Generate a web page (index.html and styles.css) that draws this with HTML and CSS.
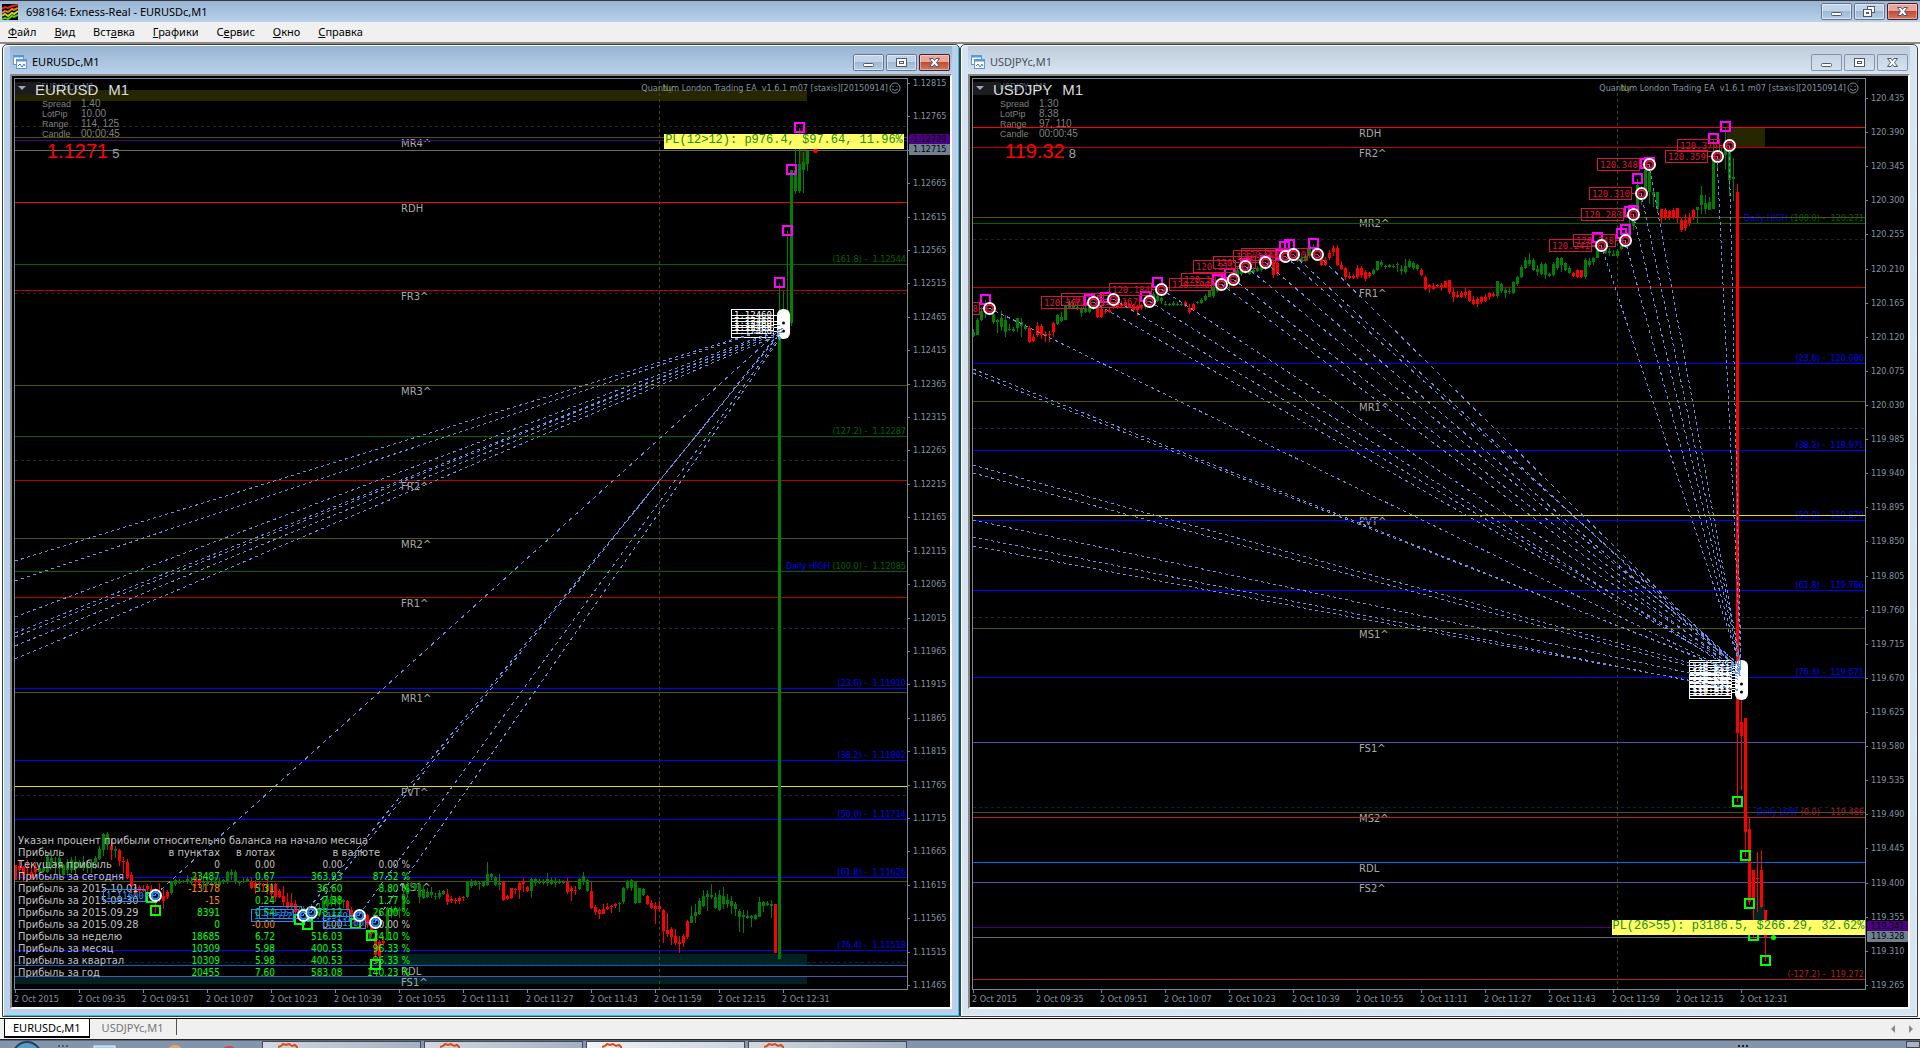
FILE: index.html
```html
<!DOCTYPE html>
<html lang="ru">
<head>
<meta charset="utf-8">
<title>698164: Exness-Real - EURUSDc,M1</title>
<link rel="stylesheet" href="styles.css">
</head>
<body>
<header class="titlebar">
  <svg class="app-icon" viewBox="0 0 16 16" aria-hidden="true"><rect width="16" height="16" fill="#000"/><g fill="none" stroke-width="2"><path d="M0 5l3-2 3 1 4-2 6-1" stroke="#e03020"/><path d="M0 9l3-2 3 1 4-3 2 1 4-2" stroke="#f08020"/><path d="M0 12l3-2 3 2 4-3 2 1 4-3" stroke="#c8d820"/><path d="M0 15l3-1 3 1 4-3 2 1 4-2" stroke="#50d020"/></g></svg>
  <h1 class="app-title">698164: Exness-Real - EURUSDc,M1</h1>
  <div class="controls">
    <button class="ctl" aria-label="Свернуть"><svg viewBox="0 0 31 17"><rect x="10.500" y="9.500" width="10" height="3" rx="1"/></svg></button>
    <button class="ctl" aria-label="Восстановить"><svg viewBox="0 0 31 17"><rect x="13.500" y="3.500" width="7" height="6"/><rect x="9.500" y="6.500" width="8" height="7"/><rect x="12.500" y="9.500" width="2" height="1"/></svg></button>
    <button class="ctl ctl-close" aria-label="Закрыть"><svg viewBox="0 0 31 17"><path d="M10.500 4.500h3.500l1.500 2 1.500-2h3.500l-3 4 3 4h-3.500l-1.500-2-1.500 2h-3.500l3-4z"/></svg></button>
  </div>
</header>
<nav class="menu">
  <a href="#file"><u>Ф</u>айл</a><a href="#view"><u>В</u>ид</a><a href="#insert">Вст<u>а</u>вка</a><a href="#charts"><u>Г</u>рафики</a><a href="#tools">С<u>е</u>рвис</a><a href="#window"><u>О</u>кно</a><a href="#help"><u>С</u>правка</a>
</nav>

<main class="mdi">
  <section class="win win-active">
    <header class="win-title">
      <svg class="win-icon" viewBox="0 0 14 14" aria-hidden="true"><g fill="#fff" stroke="#5b96e0"><rect x=".5" y=".5" width="10" height="9"/><rect x="3.500" y="4.500" width="10" height="9"/></g><path d="M0 1.500h11M3 5.500h11" stroke="#5b96e0" stroke-width="2"/><path d="M5 11l2-2 2 3 2-3 1 2" fill="none" stroke="#4080d0"/></svg>
      <h2>EURUSDc,M1</h2>
      <div class="controls">
        <button class="ctl" aria-label="Свернуть"><svg viewBox="0 0 31 17"><rect x="10.500" y="9.500" width="10" height="3" rx="1"/></svg></button>
        <button class="ctl" aria-label="Развернуть"><svg viewBox="0 0 31 17"><rect x="10.500" y="4.500" width="10" height="8"/><rect x="13.500" y="7.500" width="4" height="2"/></svg></button>
        <button class="ctl ctl-close" aria-label="Закрыть"><svg viewBox="0 0 31 17"><path d="M10.500 4.500h3.500l1.500 2 1.500-2h3.500l-3 4 3 4h-3.500l-1.500-2-1.500 2h-3.500l3-4z"/></svg></button>
      </div>
    </header>
    <div class="client" data-chart="eurusd">
      <div class="plot">
        <svg class="canvas" role="img" aria-label="EURUSD M1"></svg>
        <div class="info">
          <button class="dropdown" aria-label="Торговля"></button>
          <span class="ghost">EURUSDc,M1</span>
          <div class="symbol"><span>EURUSD</span><span>M1</span></div>
          <dl class="stats"><dt>Spread</dt><dd>1.40</dd><dt>LotPip</dt><dd>10.00</dd><dt>Range</dt><dd>114, 125</dd><dt>Candle</dt><dd>00:00:45</dd></dl>
          <div class="quote">1.1271<small>5</small></div>
        </div>
        <table class="profit">
          <caption>Указан процент прибыли относительно баланса на начало месяца</caption>
          <thead><tr><th>Прибыль</th><th>в пунктах</th><th>в лотах</th><th colspan="2" class="cur">в валюте</th></tr></thead>
          <tbody>
          <tr class="zero"><th>Текущая прибыль</th><td>0</td><td>0.00</td><td>0.00</td><td>0.00 %</td></tr>
          <tr><th>Прибыль за сегодня</th><td>23487</td><td>0.67</td><td>363.93</td><td>87.52 %</td></tr>
          <tr><th>Прибыль за 2015.10.01</th><td class="neg">-13178</td><td>5.31</td><td>36.60</td><td>8.80 %</td></tr>
          <tr><th>Прибыль за 2015.09.30</th><td class="neg">-15</td><td>0.24</td><td>7.38</td><td>1.77 %</td></tr>
          <tr><th>Прибыль за 2015.09.29</th><td>8391</td><td>0.54</td><td>78.12</td><td>26.00 %</td></tr>
          <tr><th>Прибыль за 2015.09.28</th><td>0</td><td class="neg">-0.00</td><td class="nil">0.00</td><td class="nil">0.00 %</td></tr>
          <tr><th>Прибыль за неделю</th><td>18685</td><td>6.72</td><td>516.03</td><td>124.10 %</td></tr>
          <tr><th>Прибыль за месяц</th><td>10309</td><td>5.98</td><td>400.53</td><td>96.33 %</td></tr>
          <tr><th>Прибыль за квартал</th><td>10309</td><td>5.98</td><td>400.53</td><td>96.33 %</td></tr>
          <tr><th>Прибыль за год</th><td>20455</td><td>7.60</td><td>583.08</td><td>140.23 %</td></tr>
          </tbody>
        </table>
        <svg class="canvas marks" aria-hidden="true"></svg>
        <p class="expert">Quantum London Trading EA&nbsp; v1.6.1 m07 [staxis][20150914]<svg viewBox="0 0 12 12"><circle cx="6" cy="6" r="5"/><path d="M3 7q3 3 6 0M4 4v1M8 4v1"/></svg></p>
        <output class="pl pl-eur">PL(12&gt;12): p976.4, $97.64, 11.96%</output>
      </div>
      <ol class="prices"></ol>
      <ol class="times"></ol>
    </div>
  </section>

  <section class="win">
    <header class="win-title">
      <svg class="win-icon" viewBox="0 0 14 14" aria-hidden="true"><g fill="#fff" stroke="#5b96e0"><rect x=".5" y=".5" width="10" height="9"/><rect x="3.500" y="4.500" width="10" height="9"/></g><path d="M0 1.500h11M3 5.500h11" stroke="#5b96e0" stroke-width="2"/><path d="M5 11l2-2 2 3 2-3 1 2" fill="none" stroke="#4080d0"/></svg>
      <h2>USDJPYc,M1</h2>
      <div class="controls">
        <button class="ctl" aria-label="Свернуть"><svg viewBox="0 0 31 17"><rect x="10.500" y="9.500" width="10" height="3" rx="1"/></svg></button>
        <button class="ctl" aria-label="Развернуть"><svg viewBox="0 0 31 17"><rect x="10.500" y="4.500" width="10" height="8"/><rect x="13.500" y="7.500" width="4" height="2"/></svg></button>
        <button class="ctl" aria-label="Закрыть"><svg viewBox="0 0 31 17"><path d="M10.500 4.500h3.500l1.500 2 1.500-2h3.500l-3 4 3 4h-3.500l-1.500-2-1.500 2h-3.500l3-4z"/></svg></button>
      </div>
    </header>
    <div class="client" data-chart="usdjpy">
      <div class="plot">
        <svg class="canvas" role="img" aria-label="USDJPY M1"></svg>
        <div class="info">
          <button class="dropdown" aria-label="Торговля"></button>
          <span class="ghost">USDJPYc,M1</span>
          <div class="symbol"><span>USDJPY</span><span>M1</span></div>
          <dl class="stats"><dt>Spread</dt><dd>1.30</dd><dt>LotPip</dt><dd>8.38</dd><dt>Range</dt><dd>97, 110</dd><dt>Candle</dt><dd>00:00:45</dd></dl>
          <div class="quote">119.32<small>8</small></div>
        </div>
        <svg class="canvas marks" aria-hidden="true"></svg>
        <p class="expert">Quantum London Trading EA&nbsp; v1.6.1 m07 [staxis][20150914]<svg viewBox="0 0 12 12"><circle cx="6" cy="6" r="5"/><path d="M3 7q3 3 6 0M4 4v1M8 4v1"/></svg></p>
        <output class="pl pl-jpy">PL(26&gt;55): p3186.5, $266.29, 32.62%</output>
      </div>
      <ol class="prices prices-jpy"></ol>
      <ol class="times"></ol>
    </div>
  </section>
</main>

<div class="tabs">
  <a class="tab tab-on" href="#eurusd">EURUSDc,M1</a>
  <a class="tab" href="#usdjpy">USDJPYc,M1</a>
  <div class="scroll"><button class="prev" aria-label="Назад"></button><button class="next" aria-label="Вперёд"></button></div>
</div>
<footer class="taskbar">
  <svg class="tray" viewBox="0 0 259 7" aria-hidden="true"><circle cx="27" cy="15" r="14" fill="#5a9cc8" stroke="#243f60" stroke-width="2"/><path d="M58 5h2M62 5h2M66 5h2" stroke="#222" stroke-width="1"/><rect x="94" y="5" width="21" height="4" fill="#9fd4f0" stroke="#e8f4fc"/><circle cx="175" cy="12" r="8" fill="#e8a860"/><circle cx="229" cy="14" r="9" fill="#d04848"/></svg>
  <button class="task" aria-label="EURUSD"><svg viewBox="0 0 20 5"><path d="M0 4l3-1 2-2 3 1 3-1 3 2 3-1 3 3" /></svg></button><button class="task" aria-label="USDJPY"><svg viewBox="0 0 20 5"><path d="M0 4l3-1 2-2 3 1 3-1 3 2 3-1 3 3" /></svg></button><button class="task task-on" aria-label="Exness"><svg viewBox="0 0 20 5"><path d="M0 4l3-1 2-2 3 1 3-1 3 2 3-1 3 3" /></svg></button><button class="task" aria-label="MetaTrader"><svg viewBox="0 0 20 5"><path d="M0 4l3-1 2-2 3 1 3-1 3 2 3-1 3 3" /></svg></button>
  <span class="grip"></span><span class="corner"></span>
</footer>
<script src="chart.js"></script>
</body>
</html>
```
FILE: styles.css
```css
* { box-sizing: border-box; }
body { margin: 0; height: 100vh; display: flex; flex-direction: column; overflow: hidden; background: #f0f0f0; color: #000; font: 11px/16px "Noto Sans", "Open Sans", sans-serif; }
h1, h2, p, ol, dl, dd { margin: 0; padding: 0; font-size: inherit; font-weight: 400; }
ol { list-style: none; }
button { margin: 0; padding: 0; border: 0; background: none; }
a { color: inherit; text-decoration: none; }

.titlebar { display: flex; align-items: center; gap: 8px; height: 22px; padding: 0 2px; border-top: 1px solid #36393f; background: linear-gradient(#98b4d2, #b9d1ea); }
.app-icon { width: 16px; height: 16px; }
.controls { display: flex; gap: 2px; margin-left: auto; }
.ctl { width: 31px; height: 17px; border-radius: 2px; box-shadow: inset 0 0 0 1px #64748e, inset 0 0 0 2px rgba(255, 255, 255, .5); background: linear-gradient(#c0d3e8 45%, #9cb6d2 46%, #b8d0e8); }
.ctl svg { display: block; width: 31px; height: 17px; fill: #fff; stroke: #50586c; }
.ctl-close { background: linear-gradient(#e8a598 45%, #c04830 46%, #d08068); box-shadow: inset 0 0 0 1px #4c1c28, inset 0 0 0 2px rgba(255, 255, 255, .4); }

.menu { display: flex; gap: 18px; height: 20px; padding: 2px 8px; background: #f0f0f0; }
.menu a { line-height: 16px; }

.mdi { flex: 1; display: flex; min-height: 0; padding: 0 2px 1px; border-top: 2px solid #8a8a86; background: #fff; }
.win { flex: 1; min-width: 0; display: flex; flex-direction: column; padding: 1px 7px 7px; border: 1px solid #3c4046; border-radius: 5px 5px 0 0; background: #d7e4f2; box-shadow: inset 1px 1px #fff, inset -1px -1px #e8f0f8; color: #4a4f58; }
.win-active { background: #b9d1ea; box-shadow: inset 1px 1px #fff, inset -1px -1px #30c0e0; color: #000; }
.win-title { display: flex; gap: 5px; height: 28px; padding: 8px 2px 0 3px; background: linear-gradient(#bfcddb, #d7e4f2); }
.win-active .win-title { background: linear-gradient(#98b4d2, #b9d1ea); }
.win-icon { width: 14px; height: 14px; margin-top: 1px; }
.win:not(.win-active) .ctl { background: none; box-shadow: inset 0 0 0 1px #8494ac; }

.client { flex: 1; min-height: 0; display: grid; grid-template: minmax(0, 1fr) 17px / minmax(0, 1fr) 42px; padding: 2px 0 0 2px; border: 2px solid; border-color: #888884 #fff #fff #888884; background: #000; font: 9px/10px "DejaVu Sans Condensed", "DejaVu Sans", sans-serif; color: #8494a4; }
.plot { position: relative; border: 1px solid #778899; overflow: hidden; }
.canvas { position: absolute; inset: 0; width: 100%; height: 100%; }

.prices { display: flex; flex-direction: column; justify-content: space-between; position: relative; }
.prices-jpy { padding-top: 15px; }
.prices li { padding-left: 5px; position: relative; white-space: nowrap; }
.prices li::before { content: ""; position: absolute; left: 0; top: 5px; width: 2px; height: 1px; background: #778899; }
.prices .badge { position: absolute; left: 1px; right: 0; height: 11px; padding-left: 4px; color: #000; background: #708090; line-height: 11px; }
.prices .badge::before { content: none; }
.prices .bid { background: #4b0082; }
.times { display: flex; overflow: hidden; }
.times li { flex: 0 0 64px; padding-top: 3px; line-height: 13px; white-space: nowrap; position: relative; }
.times li::before { content: ""; position: absolute; left: 1px; top: 0; width: 1px; height: 3px; background: #778899; }

.info { position: absolute; left: 0; top: 3px; font-family: "Liberation Sans", Arial, sans-serif; }
.dropdown { position: absolute; left: 0; top: 0; width: 26px; height: 13px; background: #1c1c1c; }
.dropdown::before { content: ""; position: absolute; left: 3px; top: 4px; border: 4px solid transparent; border-top-color: #9aa8b8; border-bottom: 0; }
.ghost { position: absolute; left: 26px; top: 0; color: #566474; font: 9px/10px "DejaVu Sans Condensed", "DejaVu Sans", sans-serif; }
.symbol { position: relative; display: flex; gap: 10px; padding-left: 20px; color: #dcdcdc; font-size: 15px; line-height: 16px; }
.stats { display: grid; grid-template-columns: 39px auto; padding: 1px 0 0 27px; color: #808080; font-size: 10px; line-height: 10px; }
.stats dt { font-size: 9px; }
.quote { padding-left: 32px; color: #f00; font-size: 20px; line-height: 24px; }
.quote small { margin-left: 4px; color: #a0a0a0; font-size: 13px; }

.expert { position: absolute; right: 6px; top: 3px; display: flex; gap: 1px; line-height: 12px; white-space: nowrap; }
.expert svg { width: 12px; height: 12px; fill: none; stroke: #778899; }
.pl { position: absolute; width: 240px; height: 15px; background: #ffff66; color: #228b22; font: 12px/12px "Liberation Mono", "Courier New", monospace; text-align: center; white-space: nowrap; }
.pl-eur { right: 3px; top: 55px; }
.pl-jpy { right: 0; top: 841px; width: 253px; }

.profit { position: absolute; left: 3px; top: 756px; width: 392px; table-layout: fixed; border-collapse: collapse; color: #0f0; font: 10px/12px "DejaVu Sans Condensed", "DejaVu Sans", sans-serif; }
.profit caption, .profit th { color: #c0c0c0; text-align: left; font-size: 11px; font-weight: 400; line-height: 12px; white-space: nowrap; }
.profit caption { height: 12px; }
.profit th, .profit td { height: 12px; padding: 0; }
.profit td, .profit thead th + th { text-align: right; }
.profit th:nth-child(1) { width: 137px; }
.profit th:nth-child(2) { width: 65px; }
.profit th:nth-child(3) { width: 55px; }
.profit .cur { padding-right: 30px; }
.profit .neg { color: #ff8c00; }
.profit .zero td, .profit .nil { color: #c0c0c0; }

.solid, .dash, .trade { shape-rendering: crispEdges; }
.dash, .trade { stroke-dasharray: 3 3; }
.trade { stroke: #6495ed; }
.level { fill: #a9a9a9; font: 10px "DejaVu Sans", sans-serif; }
.fib { font: 9px "DejaVu Sans Condensed", "DejaVu Sans", sans-serif; white-space: pre; text-anchor: end; }
.tag { font: 9px "DejaVu Sans Mono", monospace; }

.tabs { display: flex; align-items: flex-start; height: 22px; padding-left: 4px; border-top: 1px solid #000; border-bottom: 1px solid #222; background: #f0f0f0; }
.tab { height: 16px; padding: 0 12px; border-right: 1px solid #555; color: #777; line-height: 17px; }
.tab-on { height: 19px; padding: 0 8px; border: 1px solid #000; border-width: 0 1px 2px; background: #fff; color: #000; }
.scroll { display: flex; gap: 14px; margin: 6px 7px 0 auto; }
.prev, .next { border: 4px solid transparent; border-left: 0; border-right-color: #888; }
.next { border-left: 4px solid #888; border-right: 0; }

.taskbar { display: flex; gap: 3px; height: 8px; overflow: hidden; border-top: 1px solid #5a6878; background: #8496ad; }
.tray { width: 259px; height: 7px; overflow: hidden; flex: none; }
.task { width: 159px; height: 7px; padding: 1px 0 0 15px; border: 1px solid #3c4a5c; border-bottom: 0; background: linear-gradient(90deg, #d4d8de, #a4b0be); }
.task-on { background: linear-gradient(90deg, #f0f2f4, #ccd4dc); }
.task svg { display: block; width: 20px; height: 5px; fill: none; stroke: #e04818; stroke-width: 2; }
.grip { width: 10px; height: 2px; margin: 4px 155px 0 auto; border-top: 2px dotted #222; }
.corner { width: 14px; background: #a8b4c4; border: 1px solid #445; }
```
FILE: chart.js
```js
// Draws both price charts: levels, candles, order marks and axes.
const NS = 'http://www.w3.org/2000/svg';
const RED = '#f00', FR = '#c00000', OLIVE = '#555500', GREEN = '#006400', BLUE = '#0000ff', PURPLE = '#5a4fb0', BROWN = '#b22222';

const charts = {
  eurusd: {
    ox: 15, oy: 79, base: 800,
    prices: { from: 1.12815, step: 0.0005, count: 28, digits: 5, skip: 2 },
    badges: [['1.12729', 56, 'bid'], ['1.12715', 66, '']],
    rects: [[15, 90, 792, 11, '#262600'], [800, 128, 7, 37, '#262200'], [384, 954, 423, 11, '#002222'], [15, 977, 792, 7, '#002222']],
    dashes: [[126, '#2e2618'], [293, '#1f2a14'], [460, '#2e2618'], [628, '#2a2458'], [795, '#24241c'], [962, '#083008']],
    lines: [[137, OLIVE], [140, '#4b0082'], [150, '#696969'], [202, RED], [264, GREEN], [290, FR], [385, OLIVE], [436, GREEN], [480, FR], [538, OLIVE], [571, GREEN], [597, FR], [688, BLUE], [692, OLIVE], [760, BLUE], [786, '#e6d800'], [819, BLUE], [877, BLUE], [881, OLIVE], [950, BLUE], [965, '#0060d8'], [976, PURPLE]],
    vline: 659,
    levels: [['MR4^', 137], ['RDH', 202], ['FR3^', 290], ['MR3^', 385], ['FR2^', 480], ['MR2^', 538], ['FR1^', 597], ['MR1^', 692], ['PVT^', 786], ['MS1^', 881], ['RDL', 965], ['FS1^', 976]],
    fibs: [['(161.8) -  1.12544', 264, GREEN], ['(127.2) -  1.12287', 436, GREEN], ['(100.0) -  1.12085', 571, GREEN, 'Daily HIGH '], ['(23.6) -  1.11910', 688, BLUE], ['(38.2) -  1.11802', 760, BLUE], ['(50.0) -  1.11714', 819, BLUE], ['(61.8) -  1.11626', 877, BLUE], ['(76.4) -  1.11518', 950, BLUE]],
    levelX: 401,
    candles: `r65 65 80 80,r60 66 70 77,r66 67 75 81,r60 66 68 80,r65 72 78 80,r63 67 72 78,g63 68 72 74,g62 68 71 72,g54 57 72 73,g55 58 62 68,g57 62 66 75,g52 58 68 75,g64 65 75 76,g59 62 70 76,g57 60 70 73,g56 63 69 75,g60 62 66 68,g56 62 68 71,g61 64 68 73,g59 63 67 73,g56 58 63 69,g46 49 59 60,g33 34 50 56,g32 34 45 50,r39 46 50 60,g46 49 51 58,r49 50 61 66,r57 61 62 73,r59 62 78 79,r72 75 86 93,r84 87 93 96,r85 87 91 93,r85 89 91 92,r84 86 89 98,r85 89 97 100,r88 92 96 113,r83 97 98 102,r89 96 101 109,r90 92 97 99,g81 82 93 95,g79 80 84 86,g79 81 83 84,g80 81 82 83,g75 79 81 84,g77 81 83 85,r76 77 82 88,r75 80 83 87,g76 82 83 90,g77 82 84 86,g78 83 84 86,g77 81 84 86,g78 81 85 87,g79 80 82 84,g71 72 82 84,g69 72 75 80,g70 72 82 84,g81 82 83 86,g78 81 82 83,g77 79 81 82,r78 82 88 89,r80 83 88 94,r82 83 85 92,r83 84 86 92,r80 84 91 94,r83 86 94 98,r83 84 97 102,r89 91 97 98,r86 96 102 106,r93 102 108 109,r93 103 107 110,r100 104 112 115,r107 110 112 118,g106 108 116 119,r107 110 116 118,g104 107 112 120,g106 110 116 118,g103 108 115 117,g97 100 108 110,g95 99 106 109,g94 97 104 107,g96 99 102 106,g95 98 100 110,g99 100 102 108,r100 101 110 112,r107 110 115 118,r111 114 120 126,r112 116 119 122,r112 117 121 126,r114 115 125 128,r118 119 134 137,r131 140 155 162,r140 142 156 158,r136 141 143 146,g107 108 140 141,g106 109 112 118,g106 108 112 114,g107 109 111 118,g90 94 109 110,g82 84 94 96,g82 83 85 88,g83 84 89 91,g82 84 97 103,g86 89 98 99,g88 92 97 98,g87 92 95 98,g93 96 97 100,g90 93 97 99,g90 91 94 95,r89 94 102 105,r96 99 101 103,r98 100 101 104,r96 98 101 104,r96 97 98 101,g81 82 97 98,g79 81 86 88,g80 82 85 86,g81 83 84 90,g81 82 86 87,g62 74 85 86,g73 74 77 80,g76 77 85 86,g74 83 85 90,r81 82 100 101,r95 96 99 100,r88 88 98 99,r88 89 90 94,r82 83 90 99,r78 81 84 92,r86 87 91 92,g78 79 91 98,g78 79 83 86,g79 81 83 84,g79 82 83 85,g73 79 83 86,g78 80 84 85,g78 81 83 87,g79 82 83 84,g80 81 83 84,r78 82 92 94,r86 88 91 101,r86 90 91 95,g78 79 89 90,g72 76 82 85,g79 80 91 92,r82 91 108 109,r105 107 112 115,r109 110 114 119,r104 109 114 114,r103 107 109 110,r105 106 107 113,r103 104 106 108,g102 103 104 112,g87 88 102 104,g80 82 88 90,g79 80 88 91,g81 82 103 104,g88 88 103 103,g88 89 95 96,r95 96 104 105,r100 103 108 109,r102 106 109 124,r101 106 109 112,r109 110 131 143,r113 130 134 137,r127 129 137 145,r129 136 143 145,r136 142 144 153,r134 136 143 147,r120 121 137 139,g106 116 123 123,g104 112 116 123,g98 101 114 115,g90 96 106 107,g90 94 97 111,g84 95 97 99,g93 97 108 109,g90 95 110 111,g87 96 104 109,g94 100 104 108,g96 101 106 114,g102 104 109 116,g109 111 117 132,g110 115 117 133,g110 116 118 119,g115 116 118 127,g114 115 119 120,g97 102 117 117,g101 102 106 112,g101 103 105 106,g100 104 106 118,r104 104 153 153,g-517 -465 159 159,g-509 -490 -480 -463,g-569 -490 -480 -463,g-630 -630 -477 -474,g-666 -630 -609 -606,g-672 -636 -609 -607,g-648 -638 -630 -607,g-649 -649 -636 -629`,
    dot: [815, 150, '#f00'],
    tradeColor: '#1e90ff',
    trades: [[155, 895, '1.11600', 327], [303, 915, '1.11577', 330], [311, 912, '1.11577', 328], [359, 915, '1.11579', 332], [375, 922, '1.11560', 334]],
    exitX: 783,
    incoming: [[561, 324], [581, 324], [617, 328], [633, 329], [637, 329], [646, 331], [659, 333]],
    up: [[799, 127], [791, 169], [787, 230], [779, 282]],
    down: [[155, 910], [151, 897], [299, 919], [307, 924], [355, 923], [371, 935], [375, 964]],
    stack: { x: 731, top: 309, bottom: 337, text: '1.12460', px: 777, rows: [309, 315, 318, 321, 325] }
  },
  usdjpy: {
    ox: 973, oy: 79, base: 200,
    prices: { from: 120.435, step: 0.045, count: 27, digits: 3, skip: -1 },
    badges: [['119.341', 843, 'bid'], ['119.328', 853, '']],
    rects: [[1727, 127, 38, 20, '#262600'], [1754, 900, 11, 35, '#002222']],
    dashes: [[239, '#24241c'], [428, '#2a2458'], [617, '#2e2618'], [807, '#083008']],
    lines: [[127, RED], [147, FR], [217, OLIVE], [223, GREEN], [287, FR], [363, BLUE], [401, OLIVE], [450, BLUE], [515, '#e6d800'], [520, BLUE], [590, BLUE], [628, OLIVE], [677, BLUE], [742, PURPLE], [812, OLIVE], [817, BROWN], [862, '#0070e8'], [882, PURPLE], [927, '#4b0082'], [937, '#696969'], [979, BROWN]],
    vline: 1617,
    levels: [['RDH', 127], ['FR2^', 147], ['MR2^', 217], ['FR1^', 287], ['MR1^', 401], ['PVT^', 515], ['MS1^', 628], ['FS1^', 742], ['MS2^', 812], ['RDL', 862], ['FS2^', 882]],
    fibs: [['(100.0) -  120.271', 223, GREEN, 'Daily HIGH '], ['(23.6) -  120.086', 363, BLUE], ['(38.2) -  119.971', 450, BLUE], ['(50.0) -  119.879', 520, BLUE], ['(61.8) -  119.786', 590, BLUE], ['(76.4) -  119.671', 677, BLUE], ['(0.0) -  119.486', 817, '#b0183c', 'Daily LOW '], ['(-127.2) -  119.272', 979, BROWN]],
    levelX: 1359,
    candles: `g129 132 136 137,g118 120 135 135,g107 111 120 121,g100 104 112 118,g104 108 113 114,g110 114 122 124,g119 120 122 133,g111 118 127 131,g115 120 132 137,g124 129 130 131,g127 129 131 132,g118 118 128 132,g118 122 126 137,g124 126 129 130,r126 128 142 143,r134 137 141 142,r122 126 135 137,r124 126 135 139,r131 134 136 142,r131 134 135 142,r122 123 132 137,g114 115 124 125,g112 117 121 122,g106 106 120 120,g101 103 108 109,g103 105 108 109,g103 107 109 110,g107 109 113 117,g106 108 112 113,g105 107 112 113,g103 105 108 110,r104 108 117 118,r108 109 117 118,r110 111 112 114,r108 110 112 113,r102 104 108 109,r103 104 107 109,r101 104 106 108,r100 102 106 108,r103 104 108 109,r104 105 110 111,r105 106 110 116,r104 105 108 110,g100 102 107 109,g98 100 105 106,g92 94 101 102,g92 96 101 102,g97 98 101 104,g101 104 105 106,g103 104 105 106,g101 103 105 106,g102 104 105 106,g102 104 105 106,r101 102 106 107,r104 108 112 114,r103 104 110 111,g101 102 103 104,g98 100 103 104,g94 96 100 101,g90 91 97 97,g84 87 96 98,g83 86 91 92,g80 84 88 90,g78 80 86 88,g76 78 84 90,g74 76 80 85,g66 70 76 78,g60 64 74 76,g62 66 73 74,g64 68 74 75,g67 70 72 74,g66 68 71 72,g64 67 70 72,g60 62 68 70,g58 60 66 68,r60 62 75 78,r62 63 74 76,g50 53 60 62,g50 52 56 60,g50 54 57 60,g50 52 58 60,g52 54 60 62,g56 58 62 64,g54 56 60 62,g45 46 56 58,g44 48 54 58,g50 54 58 60,r58 59 65 66,r57 60 65 66,r50 53 58 60,r45 48 52 56,r45 48 65 66,r61 65 69 70,r67 68 77 80,r72 76 78 79,r74 76 78 79,r65 68 77 79,r66 68 75 78,r70 72 79 81,r72 73 76 78,g69 70 74 75,g61 61 70 71,g60 62 65 67,g65 66 67 69,g64 65 67 68,g64 66 67 68,g62 64 65 72,g65 69 71 75,g59 66 72 74,g59 61 67 68,g61 63 68 70,g64 65 69 71,r68 70 75 76,r76 77 89 90,r84 85 87 93,r83 86 89 90,r84 85 86 87,r83 85 87 91,r81 81 87 88,r80 80 92 94,r88 92 97 102,r91 95 97 98,r91 93 97 98,r88 92 95 98,r90 91 101 102,r96 100 104 105,r97 99 104 107,r96 97 102 104,r94 97 101 102,r92 93 97 100,r92 94 96 97,g81 81 96 98,g83 84 91 93,g88 90 93 98,g88 91 92 94,g81 82 93 94,g76 77 84 86,g65 67 77 78,g57 60 68 69,g53 60 64 66,g58 60 70 71,g65 69 72 76,g62 64 74 75,g63 64 75 79,g73 74 76 77,g62 64 75 76,g57 58 68 70,g57 58 65 72,g62 63 70 71,g66 68 73 74,r72 73 76 77,r69 70 77 78,r70 70 77 78,g58 60 77 79,g58 61 65 67,g57 58 62 65,g48 50 58 58,g42 44 48 50,g46 49 53 54,g48 51 53 56,g50 54 56 56,g49 51 56 57,g42 45 49 50,g32 36 46 48,g20 24 38 42,g8 12 26 30,g-21 -15 10 14,g-14 -5 0 5,g-32 -30 -5 -1,g-32 -28 -8 4,g-10 -8 -5 7,g-8 -8 9 13,r9 9 18 24,r8 10 18 20,r10 11 17 20,r8 10 18 19,r8 8 18 23,r17 20 30 32,r14 20 28 31,r13 18 23 26,r9 10 18 20,g7 7 10 23,g-14 -5 5 14,g-5 3 9 14,g-3 2 10 10,g-61 -40 9 9,g-50 -46 -38 -30,g-52 -48 -42 -38,g-72 -50 -45 -31,g-55 -50 -20 -4,g-42 -23 -21 1,r-16 -8 533 602,r495 522 536 590,r518 518 632 657,r618 629 702 705,r670 670 700 737,r652 678 678 712,r650 670 707 708,r710 710 737 761`,
    dot: [1773, 937, '#0f0'],
    tradeColor: '#dc143c',
    trades: [[989, 308, '120.158', 676], [1093, 302, '120.166', 672], [1113, 299, '120.166', 670], [1149, 301, '120.167', 675], [1161, 289, '120.184', 668], [1221, 284, '120.190', 673], [1233, 279, '120.197', 668], [1245, 266, '120.211', 666], [1265, 262, '120.215', 670], [1285, 256, '120.218', 667], [1293, 254, '120.220', 672], [1317, 254, '120.220', 671], [1601, 245, '120.241', 668], [1625, 240, '120.248', 670], [1633, 214, '120.283', 666], [1641, 193, '120.310', 664], [1649, 164, '120.348', 666], [1717, 156, '120.359', 666], [1729, 145, '120.374', 664]],
    exitX: 1741,
    incoming: [[369, 675], [373, 674], [465, 677], [473, 680], [520, 684], [537, 691], [546, 690]],
    up: [[985, 299], [1089, 299], [1105, 297], [1145, 296], [1157, 282], [1217, 279], [1229, 273], [1245, 263], [1265, 260], [1280, 254], [1284, 246], [1289, 244], [1313, 243], [1597, 237], [1621, 233], [1625, 229], [1629, 211], [1633, 210], [1637, 178], [1645, 163], [1649, 162], [1713, 138], [1725, 126]],
    down: [[1737, 801], [1745, 855], [1749, 903], [1753, 935], [1765, 960]],
    stack: { x: 1689, top: 660, bottom: 698, text: '119.671', px: 1735, rows: [660, 662, 665, 667, 670, 673, 675, 678, 681, 683, 686] }
  }
};

function el(parent, name, attrs, text) {
  const node = document.createElementNS(NS, name);
  for (const key in attrs) node.setAttribute(key, attrs[key]);
  if (text !== undefined) node.textContent = text;
  parent.appendChild(node);
  return node;
}

function draw(client, c) {
  const [back, marks] = client.querySelectorAll('.canvas');
  const X = x => x - c.ox, Y = y => y - c.oy;
  const box = (p, x, y, w, h, fill) => el(p, 'rect', { class: 'solid', x: X(x), y: Y(y), width: w, height: h, fill });

  c.rects.forEach(([x, y, w, h, f]) => box(back, x, y, w, h, f));
  c.dashes.forEach(([y, s]) => el(back, 'line', { class: 'dash', x1: 0, x2: '100%', y1: Y(y) + .5, y2: Y(y) + .5, stroke: s }));
  el(back, 'line', { class: 'dash', x1: X(c.vline) + .5, x2: X(c.vline) + .5, y1: 2, y2: '100%', stroke: '#4a4a10' });
  c.levels.forEach(([t, y]) => el(back, 'text', { class: 'level', x: X(c.levelX), y: Y(y) + 10 }, t));
  c.fibs.forEach(([t, y, f, lead]) => {
    const node = el(back, 'text', { class: 'fib', x: X(c.vline + 247), y: Y(y) - 2, fill: f });
    if (lead) el(node, 'tspan', { fill: BLUE }, lead);
    el(node, 'tspan', {}, t);
  });
  el(back, 'text', { class: 'fib', x: X(c.vline + 14), y: 12, fill: '#6e6e00' }, 'Ny');
  c.lines.forEach(([y, f]) => el(back, 'rect', { class: 'solid', x: 0, y: Y(y), width: '100%', height: 1, fill: f }));

  c.candles.split(',').forEach((item, i) => {
    const f = item[0] === 'r' ? '#ff0000' : '#008000';
    const [hi, top, bottom, lo] = item.slice(1).split(' ').map(Number);
    const x = c.ox + 4 * i;
    box(back, x, c.base + hi, 1, lo - hi, f);
    box(back, x - 1, c.base + top, 3, Math.max(1, bottom - top), f);
  });
  el(back, 'circle', { cx: X(c.dot[0]) + .5, cy: Y(c.dot[1]) + .5, r: 2.5, fill: c.dot[2] });

  const square = (x, y, s) => el(marks, 'rect', { x: X(x) - 4, y: Y(y) - 4, width: 9, height: 9, fill: 'none', stroke: s, 'stroke-width': 2 });
  c.up.forEach(([x, y]) => square(x, y, '#f0f'));
  c.down.forEach(([x, y]) => square(x, y, '#0f0'));
  c.trades.forEach(([x, y, t]) => {
    el(marks, 'rect', { x: X(x) - 51.5, y: Y(y) - 5.5, width: 42, height: 12, fill: 'none', stroke: c.tradeColor });
    el(marks, 'text', { class: 'tag', x: X(x) - 49, y: Y(y) + 4, fill: c.tradeColor }, t);
    box(marks, x - 9, y, 9, 1, c.tradeColor);
  });
  c.trades.forEach(([x, y]) => {
    const at = { cx: X(x) + .5, cy: Y(y) + .5 };
    el(marks, 'circle', { ...at, r: 5.5, fill: '#000', stroke: '#fff', 'stroke-width': 2 });
    el(marks, 'circle', { ...at, r: 3.5, fill: '#000', stroke: c.tradeColor, 'stroke-width': 2 });
    box(marks, x - 2, y, 3, 1, c.tradeColor);
  });

  const s = c.stack;
  s.rows.forEach(y => {
    el(marks, 'rect', { x: X(s.x) + .5, y: Y(y) + .5, width: 42, height: 12, fill: 'none', stroke: '#fff' });
    el(marks, 'text', { class: 'tag', x: X(s.x) + 3, y: Y(y) + 9, fill: '#fff' }, s.text);
    box(marks, s.x + 42, y + 6, 8, 1, '#fff');
  });
  el(marks, 'rect', { x: X(s.px), y: Y(s.top), width: 13, height: s.bottom - s.top + 2, rx: 6, fill: '#fff' });
  [6, 14].forEach(d => el(marks, 'circle', { cx: X(s.px) + 6.5, cy: Y(s.bottom) - d, r: 1.5, fill: '#000' }));

  // Dashes are counted along the longer axis, so every link shows the same rhythm.
  const link = (x, y, end) => el(marks, 'line', { class: 'trade', x1: X(x), y1: Y(y), x2: X(c.exitX), y2: Y(end), pathLength: Math.max(c.exitX - x, Math.abs(end - y)) });
  c.trades.forEach(([x, y, , end]) => link(x, y, end));
  c.incoming.forEach(([y, end]) => link(c.ox, y, end));

  const prices = client.querySelector('.prices');
  for (let i = 0; i < c.prices.count; i++) {
    const li = document.createElement('li');
    li.textContent = i === c.prices.skip ? '\u00a0' : (c.prices.from - i * c.prices.step).toFixed(c.prices.digits);
    prices.appendChild(li);
  }
  c.badges.forEach(([t, top, kind]) => {
    const li = document.createElement('li');
    li.className = 'badge ' + kind;
    li.style.top = top + 'px';
    li.textContent = t;
    prices.appendChild(li);
  });

  const times = client.querySelector('.times');
  ['2015', '09:35', '09:51', '10:07', '10:23', '10:39', '10:55', '11:11', '11:27', '11:43', '11:59', '12:15', '12:31'].forEach(t => {
    const li = document.createElement('li');
    li.textContent = '2 Oct ' + t;
    times.appendChild(li);
  });
}

document.querySelectorAll('.client').forEach(node => draw(node, charts[node.dataset.chart]));
```
